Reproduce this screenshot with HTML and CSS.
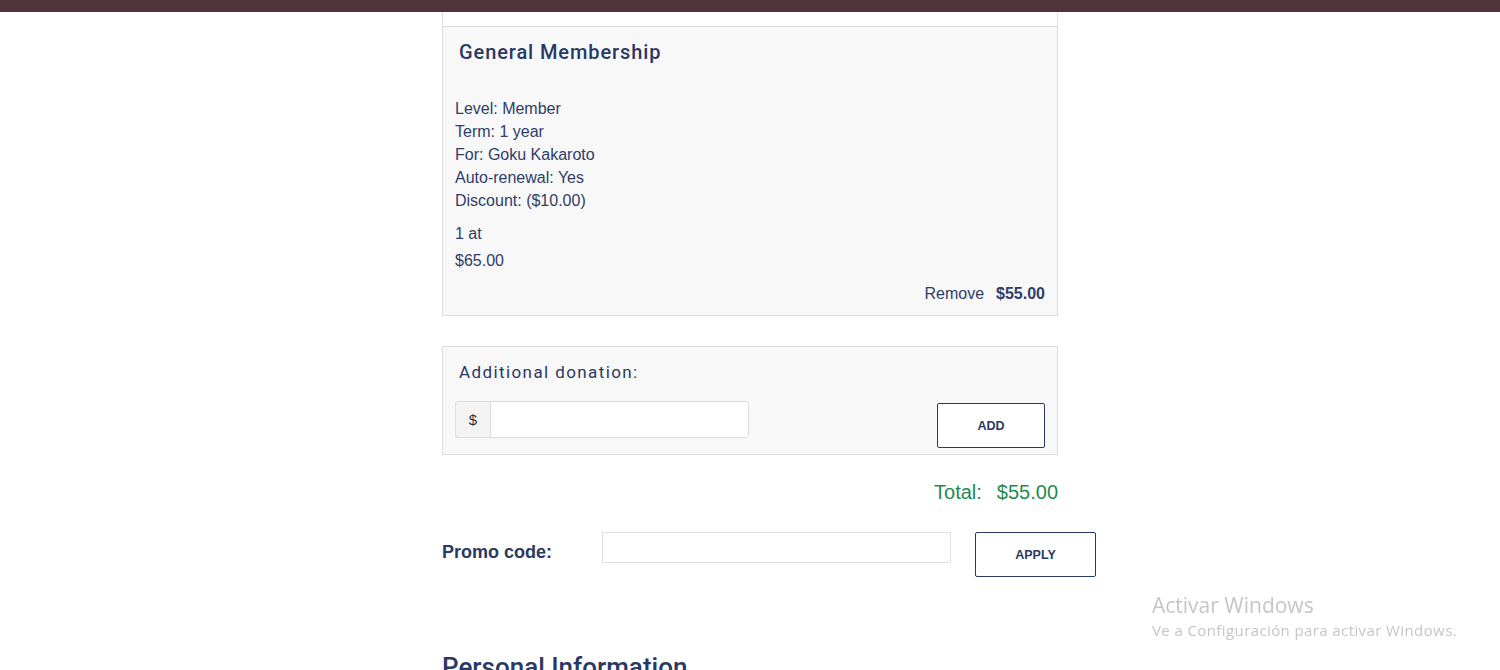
FILE: index.html
```html
<!DOCTYPE html>
<html lang="en">
<head>
<meta charset="utf-8">
<title>Cart</title>
<link rel="stylesheet" href="styles.css">
</head>
<body>
<div class="topbar"></div>
<main class="wrap">
  <div class="prev-piece"></div>
  <section class="card item">
    <h3 class="item-title">General Membership</h3>
    <div class="details">
      <div>Level: Member</div>
      <div>Term: 1 year</div>
      <div>For: Goku Kakaroto</div>
      <div>Auto-renewal: Yes</div>
      <div>Discount: ($10.00)</div>
    </div>
    <div class="qty">1 at</div>
    <div class="price">$65.00</div>
    <div class="item-foot">
      <span class="remove">Remove</span>
      <span class="line-total">$55.00</span>
    </div>
  </section>

  <section class="card donation">
    <h4 class="don-title">Additional donation:</h4>
    <div class="don-row">
      <div class="input-group">
        <span class="addon">$</span>
        <input class="don-input" type="text">
      </div>
      <button class="btn btn-add">ADD</button>
    </div>
  </section>

  <div class="total">
    <span class="total-label">Total:</span>
    <span class="total-value">$55.00</span>
  </div>

  <div class="promo">
    <label class="promo-label">Promo code:</label>
    <input class="promo-input" type="text">
    <button class="btn btn-apply">APPLY</button>
  </div>

  <h2 class="section-title">Personal Information</h2>
</main>

<div class="watermark">
  <div class="wm-title">Activar Windows</div>
  <div class="wm-sub">Ve a Configuración para activar Windows.</div>
</div>
</body>
</html>
```

FILE: styles.css
```css
html, body {
  margin: 0;
  padding: 0;
  background: #ffffff;
  overflow: hidden;
  height: 670px;
}
body {
  font-family: "Liberation Sans", Arial, sans-serif;
  color: #2f3d69;
}
.topbar {
  height: 12px;
  background: #50343c;
}
.wrap {
  width: 616px;
  margin: 0 auto;
}
.prev-piece {
  height: 14px;
  border-left: 1px solid #e2e2e2;
  border-right: 1px solid #e2e2e2;
  background: #fff;
}
.card {
  border: 1px solid #dcdcdc;
  background: #f8f8f8;
  box-sizing: border-box;
}
.item {
  padding: 13px 12px 10px 12px;
}
.item-title {
  margin: 0 0 33px 4px;
  font-family: Roboto, "Liberation Sans", sans-serif;
  font-weight: 500;
  font-size: 20px;
  line-height: 24px;
  letter-spacing: 0.9px;
  color: #2a3963;
}
.details {
  font-size: 16px;
  line-height: 23px;
}
.qty {
  margin-top: 10px;
  font-size: 16px;
  line-height: 23px;
}
.price {
  margin-top: 4px;
  font-size: 16px;
  line-height: 23px;
}
.item-foot {
  margin-top: 10px;
  display: flex;
  justify-content: flex-end;
  gap: 12px;
  font-size: 16px;
  line-height: 23px;
}
.line-total {
  font-weight: bold;
}
.donation {
  margin-top: 30px;
  padding: 14px 12px 6px 12px;
}
.don-title {
  margin: 0 0 18px 4px;
  font-family: Roboto, "Liberation Sans", sans-serif;
  font-weight: 400;
  font-size: 17px;
  line-height: 22px;
  letter-spacing: 1.4px;
  color: #2a3963;
}
.don-row {
  display: flex;
  justify-content: space-between;
  align-items: flex-start;
}
.input-group {
  display: flex;
  width: 294px;
  height: 37px;
}
.addon {
  width: 35px;
  box-sizing: border-box;
  border: 1px solid #dedede;
  border-right: none;
  border-radius: 3px 0 0 3px;
  background: #f3f3f3;
  display: flex;
  align-items: center;
  justify-content: center;
  font-size: 15px;
  color: #333;
}
.don-input {
  flex: 1;
  min-width: 0;
  margin: 0;
  box-sizing: border-box;
  height: 37px;
  border: 1px solid #dedede;
  border-radius: 0 3px 3px 0;
  background: #fff;
  outline: none;
}
.btn {
  box-sizing: border-box;
  background: #fff;
  border: 1px solid #2a3963;
  border-radius: 2px;
  color: #2a3963;
  font-family: "Liberation Sans", Arial, sans-serif;
  font-weight: bold;
  font-size: 12.5px;
  height: 45px;
  padding: 0;
}
.btn-add {
  width: 108px;
  margin-top: 2px;
}
.total {
  margin-top: 26px;
  display: flex;
  justify-content: flex-end;
  gap: 15px;
  font-size: 20px;
  line-height: 22px;
  color: #1f8a4f;
}
.promo {
  margin-top: 29px;
  display: flex;
  align-items: flex-start;
}
.promo-label {
  width: 160px;
  flex: none;
  font-weight: bold;
  font-size: 18px;
  line-height: 20px;
  margin-top: 10px;
  color: #2a3963;
}
.promo-input {
  width: 349px;
  height: 31px;
  margin: 0;
  box-sizing: border-box;
  border: 1px solid #e2e2e2;
  background: #fff;
  outline: none;
  flex: none;
}
.btn-apply {
  width: 121px;
  margin-left: 24px;
  flex: none;
}
.section-title {
  margin: 75px 0 0 0;
  font-family: Roboto, "Liberation Sans", sans-serif;
  font-weight: 500;
  font-size: 26px;
  line-height: 30px;
  color: #2a3963;
}
.watermark {
  position: fixed;
  left: 1152px;
  top: 592px;
  font-family: "Open Sans", "Noto Sans", sans-serif;
  color: #c6c6c6;
}
.wm-title {
  font-size: 21px;
  line-height: 27px;
}
.wm-sub {
  font-size: 15px;
  line-height: 20px;
  letter-spacing: 0.4px;
  margin-top: 1px;
}
```
